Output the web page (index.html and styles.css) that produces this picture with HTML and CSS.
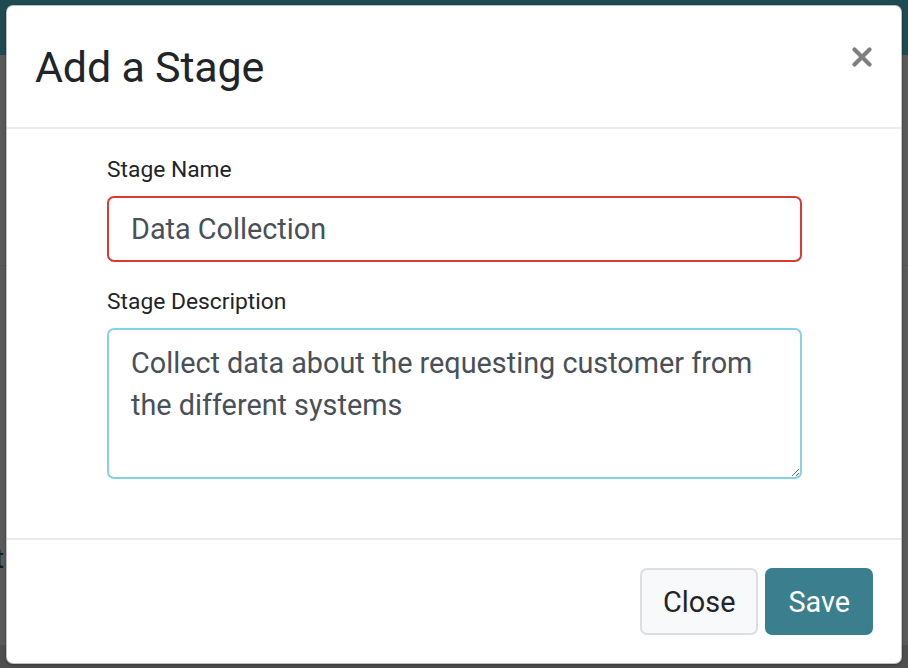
FILE: index.html
```html
<!DOCTYPE html>
<html lang="en">
<head>
<meta charset="utf-8">
<title>Add a Stage</title>
<link rel="stylesheet" href="styles.css">
</head>
<body>
<div class="page">
  <div class="navbar"></div>
  <div class="page-content">
    <div class="page-row"></div>
    <div class="page-text">t</div>
  </div>
  <div class="page-bottom"></div>
</div>

<div class="modal" role="dialog" aria-labelledby="modal-title">
  <div class="modal-header">
    <h4 class="modal-title" id="modal-title">Add a Stage</h4>
    <button class="close" type="button" aria-label="Close">
      <svg viewBox="0 0 20 20" width="20" height="20" aria-hidden="true">
        <path d="M2.5 2.5 L17.5 17.5 M17.5 2.5 L2.5 17.5" stroke="#7f7f7f" stroke-width="4.2" stroke-linecap="round" fill="none"/>
      </svg>
    </button>
  </div>
  <div class="modal-body">
    <div class="form-group">
      <label class="form-label" for="stage-name">Stage Name</label>
      <input class="form-control invalid" id="stage-name" type="text" value="Data Collection">
    </div>
    <div class="form-group last">
      <label class="form-label" for="stage-desc">Stage Description</label>
      <textarea class="form-control area focused" id="stage-desc">Collect data about the requesting customer from the different systems</textarea>
    </div>
  </div>
  <div class="modal-footer">
    <button class="btn btn-light" type="button">Close</button>
    <button class="btn btn-primary" type="button">Save</button>
  </div>
</div>
</body>
</html>
```

FILE: styles.css
```css
* { box-sizing: border-box; }

html, body {
  margin: 0;
  padding: 0;
  width: 908px;
  height: 668px;
  overflow: hidden;
}

body {
  background: #5a5a5a;
  font-family: Roboto, "Liberation Sans", sans-serif;
  color: #212529;
  position: relative;
}

.page {
  display: flex;
  flex-direction: column;
  height: 668px;
}

.navbar {
  height: 55px;
  background: #1f4a52;
  flex: none;
}

.page-content {
  flex: 1;
  display: flex;
  flex-direction: column;
}

.page-row {
  height: 211px;
  border-bottom: 1px solid #545454;
}

.page-text {
  margin-top: 278px;
  margin-left: -5px;
  font-size: 28px;
  line-height: 30px;
  color: #1a1a1a;
}

.page-bottom {
  height: 23px;
  background: #4f4f4f;
  flex: none;
}

.modal {
  position: absolute;
  left: 6px;
  top: 5px;
  width: 896px;
  height: 659px;
  background: #fff;
  border: 1px solid rgba(0, 0, 0, 0.25);
  border-radius: 7px;
  box-shadow: 0 1px 3px rgba(0, 0, 0, 0.35);
  display: flex;
  flex-direction: column;
}

.modal-header {
  height: 123px;
  flex: none;
  display: flex;
  align-items: center;
  justify-content: space-between;
  padding: 0 29px 0 28px;
  border-bottom: 2px solid #e9e9ee;
}

.modal-title {
  margin: 0;
  font-size: 43px;
  font-weight: 400;
  line-height: 52px;
  color: #212529;
  letter-spacing: -0.2px;
}

.close {
  align-self: flex-start;
  margin-top: 41px;
  padding: 0;
  border: 0;
  background: transparent;
  width: 20px;
  height: 20px;
  display: block;
}

.close svg { display: block; }

.modal-body {
  flex: none;
  padding: 24px 100px 59px;
  border-bottom: 2px solid #e9e9ee;
}

.form-group {
  display: flex;
  flex-direction: column;
  margin-bottom: 23px;
}

.form-group.last { margin-bottom: 0; }

.form-label {
  font-size: 22.8px;
  line-height: 33px;
  margin-bottom: 10px;
  color: #212529;
}

.form-control {
  display: block;
  width: 695px;
  height: 66px;
  padding: 0 21px 0 22px;
  font-family: Roboto, "Liberation Sans", sans-serif;
  font-size: 28.8px;
  line-height: 42px;
  color: #495057;
  background: #fff;
  border: 2px solid #ced4da;
  border-radius: 7px;
  outline: none;
  margin: 0;
}

.form-control.invalid { border-color: #dc3a2f; }

.form-control.area {
  height: 151px;
  padding: 12px 21px 6px 22px;
  resize: vertical;
  overflow: hidden;
}

.form-control.focused { border-color: #82d3e4; }

.modal-footer {
  flex: 1;
  display: flex;
  justify-content: flex-end;
  align-items: flex-start;
  gap: 7px;
  padding: 28px 28px 0;
}

.btn {
  height: 67px;
  padding: 0 21px;
  font-family: Roboto, "Liberation Sans", sans-serif;
  font-size: 28.8px;
  line-height: 42px;
  border-radius: 7px;
  border: 2px solid transparent;
  cursor: pointer;
}

.btn-light {
  background: #f8f9fa;
  border-color: #dcdfe2;
  color: #212529;
}

.btn-primary {
  background: #3b7f8f;
  border-color: #3b7f8f;
  color: #fff;
}
```
